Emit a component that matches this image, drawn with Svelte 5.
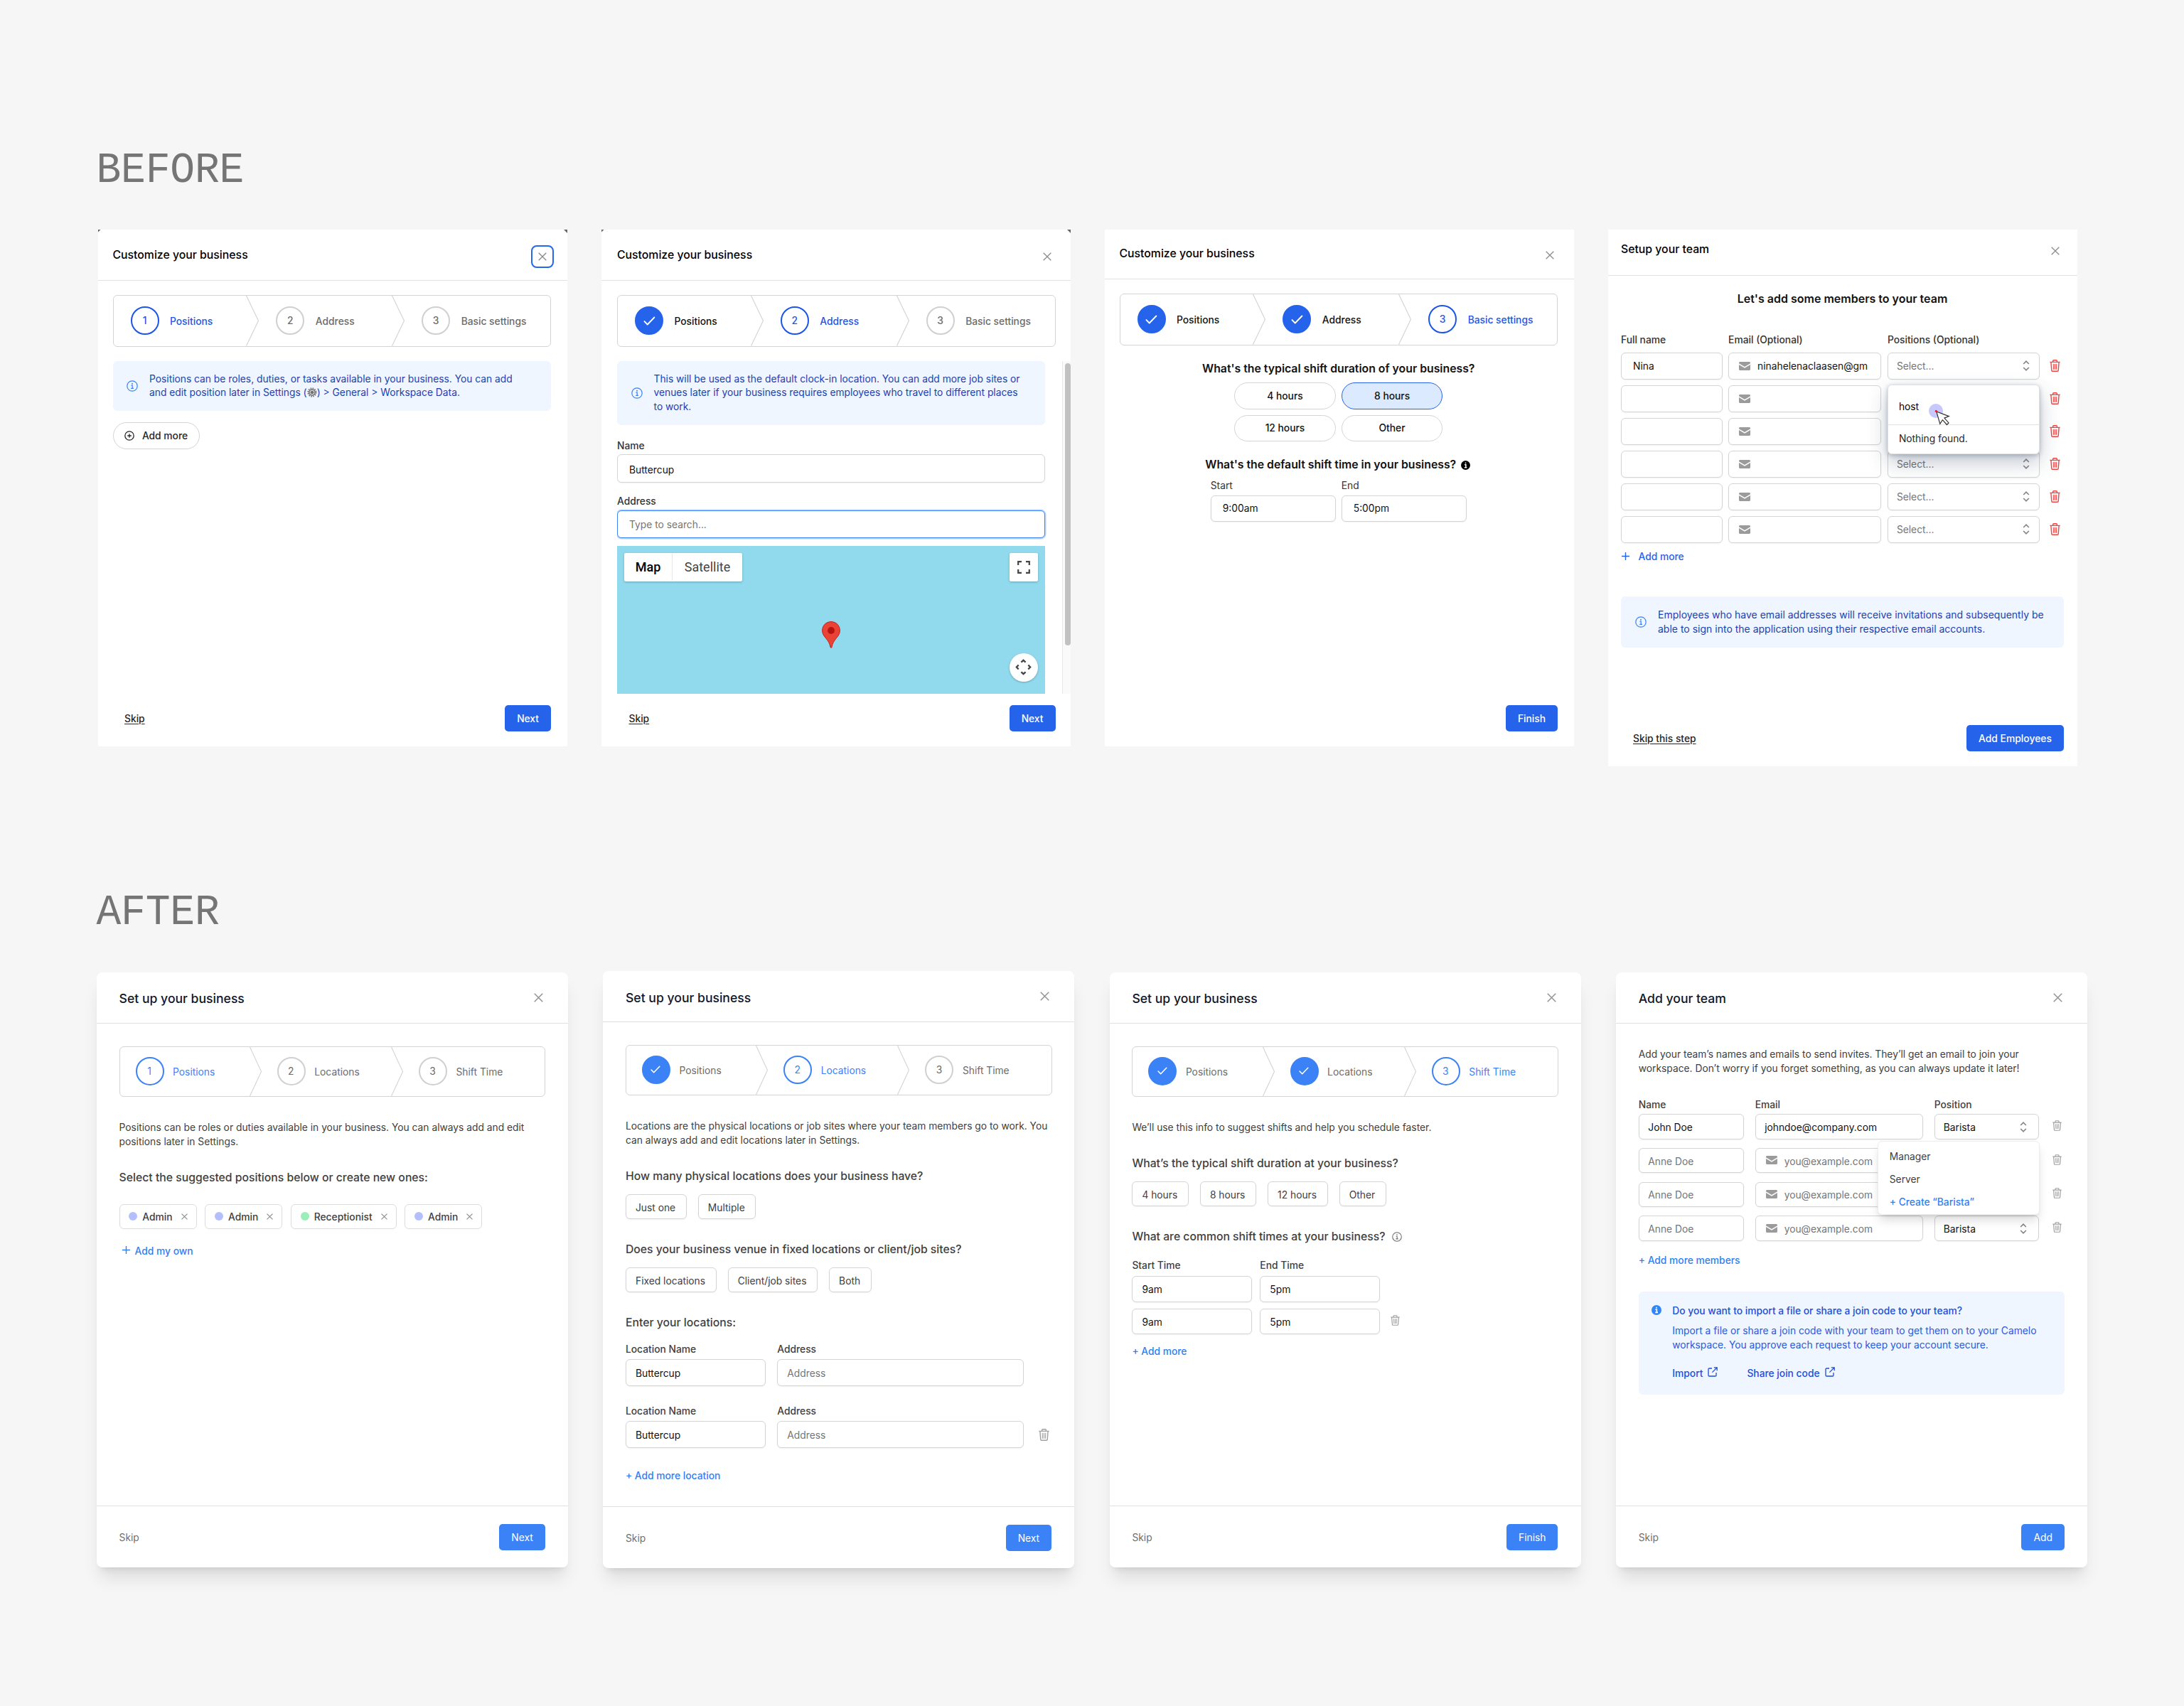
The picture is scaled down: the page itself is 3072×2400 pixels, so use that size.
<script>
  const steps = ['Positions', 'Address', 'Basic settings'];
  const newSteps = ['Positions', 'Locations', 'Shift Time'];
  const tags = [
    { name: 'Admin', tone: 'indigo' },
    { name: 'Admin', tone: 'indigo' },
    { name: 'Receptionist', tone: 'green' },
    { name: 'Admin', tone: 'indigo' },
  ];
  const oldRows = [
    { name: 'Nina', email: 'ninahelenaclaasen@gm' },
    { name: '', email: '' },
    { name: '', email: '' },
    { name: '', email: '' },
    { name: '', email: '' },
    { name: '', email: '' },
  ];
  const newRows = ['Barista', '', '', 'Barista'];
</script>

{#snippet cross()}
  <svg class="cross" viewBox="0 0 12 12"><path d="M.7.7l10.6 10.6M11.3.7L.7 11.3" /></svg>
{/snippet}

{#snippet info()}
  <svg class="info" viewBox="0 0 16 16">
    <circle cx="8" cy="8" r="7.2" />
    <path d="M6.4 7.2h1.8v4M6.2 11.3h3.8" />
    <circle class="dot" cx="8" cy="4.7" r=".95" />
  </svg>
{/snippet}

{#snippet infoSolid()}
  <svg class="info-solid" viewBox="0 0 14 14">
    <circle cx="7" cy="7" r="7" />
    <path d="M5.4 6.2h2v4.2M5.2 10.4h3.8" />
    <rect x="6.1" y="2.7" width="1.8" height="1.8" rx=".6" />
  </svg>
{/snippet}

{#snippet trash()}
  <svg class="trash" viewBox="0 0 15 17">
    <path d="M.4 3.4h14.2M4.7 3.2V1.6c0-.6.4-.9.9-.9h3.8c.5 0 .9.3.9.9v1.6M1.9 3.6l.9 11.5c0 .7.5 1.2 1.2 1.2h7c.7 0 1.2-.5 1.2-1.2l.9-11.5" />
    <path class="thin" d="M5.2 5.8l.3 8M7.5 5.8v8M9.8 5.8l-.3 8" />
  </svg>
{/snippet}

{#snippet mail()}
  <svg class="mail" viewBox="0 0 16 12">
    <path d="M0 2.2V1.5C0 .7.7 0 1.5 0h13c.8 0 1.5.7 1.5 1.5v.7L8 6.9z" />
    <path d="M0 4l8 4.7L16 4v6.5c0 .8-.7 1.5-1.5 1.5h-13C.7 12 0 11.3 0 10.5z" />
  </svg>
{/snippet}

{#snippet updown()}
  <svg class="updown" viewBox="0 0 10 15"><path d="M1.2 5L5 1.2 8.8 5M1.2 10L5 13.8 8.8 10" /></svg>
{/snippet}

{#snippet external()}
  <svg class="external" viewBox="0 0 14 14">
    <path d="M6 2H2.2C1.5 2 1 2.5 1 3.2v8.6c0 .7.5 1.2 1.2 1.2h8.6c.7 0 1.2-.5 1.2-1.2V8M8.8.8h4.4v4.4M13 1L6.4 7.6" />
  </svg>
{/snippet}

{#snippet stepper(labels, active)}
  <ol class="stepper">
    {#each labels as label, i}
      <li class:done={i < active} class:active={i === active}>
        <span class="bubble">
          {#if i < active}
            <svg class="check" viewBox="0 0 18 14"><path d="M1.4 7.6l4.6 4.8L16.4 1.6" /></svg>
          {:else}{i + 1}{/if}
        </span>
        <span class="step-label">{label}</span>
        {#if i < labels.length - 1}
          <svg class="chevron" viewBox="0 0 18 72" preserveAspectRatio="none"><path d="M.5 0L17.5 36 .5 72" /></svg>
        {/if}
      </li>
    {/each}
  </ol>
{/snippet}

<main>
  <h1>BEFORE</h1>
  <section class="row before">
    <article class="card dark-corners">
      <header><h2>Customize your business</h2><span class="focus-ring">{@render cross()}</span></header>
      <div class="body">
        {@render stepper(steps, 0)}
        <div class="notice">
          {@render info()}
          <p>Positions can be roles, duties, or tasks available in your business. You can add<br />and edit position later in Settings (<svg class="gear" viewBox="0 0 14 14"><circle class="teeth" cx="7" cy="7" r="5.7" /><circle class="rim" cx="7" cy="7" r="4.2" /><circle class="hub" cx="7" cy="7" r="1.5" /></svg>) &gt; General &gt; Workspace Data.</p>
        </div>
        <button class="pill add-pill">
          <svg class="plus-circle" viewBox="0 0 14 14"><circle cx="7" cy="7" r="6.2" /><path d="M7 4.2v5.6M4.2 7h5.6" /></svg>
          Add more
        </button>
      </div>
      <footer><a class="skip">Skip</a><button class="primary">Next</button></footer>
    </article>

    <article class="card dark-corners address">
      <header><h2>Customize your business</h2>{@render cross()}</header>
      <div class="body">
        {@render stepper(steps, 1)}
        <div class="scroll">
          <div class="scroll-content">
            <div class="notice flush">
              {@render info()}
              <p>This will be used as the default clock-in location. You can add more job sites or<br />venues later if your business requires employees who travel to different places<br />to work.</p>
            </div>
            <span class="label name-label">Name</span>
            <div class="input name-input">Buttercup</div>
            <span class="label address-label">Address</span>
            <div class="input focused placeholder">Type to search...</div>
            <div class="map">
              <div class="map-top">
                <div class="map-type"><b>Map</b><span>Satellite</span></div>
                <div class="map-btn">
                  <svg class="full" viewBox="0 0 18 18"><path d="M1.2 6V1.2H6M12 1.2h4.8V6M16.8 12v4.8H12M6 16.8H1.2V12" /></svg>
                </div>
              </div>
              <svg class="pin" viewBox="0 0 26 38">
                <path d="M13 .6C6 .6.6 6 .6 12.9c0 4.7 2.3 7.5 5 10.9 3.2 4 5.4 7 6.4 12.6.2 1.2 1.8 1.2 2 0 1-5.6 3.2-8.6 6.4-12.6 2.7-3.4 5-6.2 5-10.9C25.4 6 20 .6 13 .6z" />
                <circle cx="13" cy="13" r="4.9" />
              </svg>
              <div class="map-btn round">
                <svg class="pan" viewBox="0 0 24 24"><path d="M8.8 4.9L12 1.9l3.200 3M8.800 19.100l3.200 3 3.200-3M4.900 8.800l-3 3.200 3 3.200M19.100 8.800l3 3.200-3 3.200" /></svg>
              </div>
            </div>
          </div>
          <div class="scrollbar"><span class="thumb"></span></div>
        </div>
      </div>
      <footer><a class="skip">Skip</a><button class="primary">Next</button></footer>
    </article>

    <article class="card third">
      <header><h2>Customize your business</h2>{@render cross()}</header>
      <div class="body centered">
        {@render stepper(steps, 2)}
        <h3>What's the typical shift duration of your business?</h3>
        <div class="durations">
          <button class="pill">4 hours</button>
          <button class="pill selected">8 hours</button>
          <button class="pill">12 hours</button>
          <button class="pill">Other</button>
        </div>
        <h3 class="second">What's the default shift time in your business? {@render infoSolid()}</h3>
        <div class="shift">
          <label><span class="label">Start</span><span class="input">9:00am</span></label>
          <label><span class="label">End</span><span class="input">5:00pm</span></label>
        </div>
      </div>
      <footer class="end"><button class="primary">Finish</button></footer>
    </article>

    <article class="card team">
      <header><h2>Setup your team</h2>{@render cross()}</header>
      <div class="body">
        <h3>Let's add some members to your team</h3>
        <div class="grid heads">
          <span class="label">Full name</span><span class="label">Email (Optional)</span><span class="label">Positions (Optional)</span>
        </div>
        <div class="rows">
          {#each oldRows as r, i}
            <div class="grid">
              <div class="input">{r.name}</div>
              <div class="input with-icon">{@render mail()}{r.email}</div>
              <div class="cell">
                <div class="input select"><span>{i === 1 || i === 2 ? '' : 'Select...'}</span>{@render updown()}</div>
                {#if i === 1}
                  <div class="combo">
                    <div class="query">host</div>
                    <div class="empty">Nothing found.</div>
                    <svg class="pointer" viewBox="0 0 32 32">
                      <circle class="halo" cx="10" cy="10" r="10" />
                      <path d="M10.800 11l5 17.300 3.600-5.600 6 6.800 2.600-2.600-6-6.800 6.300-2.500z" />
                      <circle class="spot" cx="10.300" cy="10.300" r="1.500" />
                    </svg>
                  </div>
                {/if}
              </div>
              {@render trash()}
            </div>
          {/each}
        </div>
        <a class="link plus-link">
          <svg class="plus" viewBox="0 0 11 11"><path d="M5.500 0v11M0 5.500h11" /></svg>Add more
        </a>
        <div class="notice">
          {@render info()}
          <p>Employees who have email addresses will receive invitations and subsequently be<br />able to sign into the application using their respective email accounts.</p>
        </div>
      </div>
      <footer><a class="skip">Skip this step</a><button class="primary">Add Employees</button></footer>
    </article>
  </section>

  <h1 class="after-title">AFTER</h1>
  <section class="row after">
    <article class="card">
      <header><h2>Set up your business</h2>{@render cross()}</header>
      <div class="body">
        {@render stepper(newSteps, 0)}
        <p class="lead">Positions can be roles or duties available in your business. You can always add and edit<br />positions later in Settings.</p>
        <h3>Select the suggested positions below or create new ones:</h3>
        <div class="tags">
          {#each tags as t}
            <span class="tag"><i class="dot {t.tone}"></i>{t.name}{@render cross()}</span>
          {/each}
        </div>
        <a class="link own"><svg class="plus" viewBox="0 0 11 11"><path d="M5.500 0v11M0 5.500h11" /></svg>Add my own</a>
      </div>
      <footer><a class="skip">Skip</a><button class="primary">Next</button></footer>
    </article>

    <article class="card locations">
      <header><h2>Set up your business</h2>{@render cross()}</header>
      <div class="body">
        {@render stepper(newSteps, 1)}
        <p class="lead">Locations are the physical locations or job sites where your team members go to work. You<br />can always add and edit locations later in Settings.</p>
        <h3>How many physical locations does your business have?</h3>
        <div class="choices"><button>Just one</button><button>Multiple</button></div>
        <h3 class="next-q">Does your business venue in fixed locations or client/job sites?</h3>
        <div class="choices"><button>Fixed locations</button><button>Client/job sites</button><button>Both</button></div>
        <h3 class="next-q">Enter your locations:</h3>
        {#each [0, 1] as n}
          <div class="place" class:again={n === 1}>
            <label><span class="label">Location Name</span><span class="input">Buttercup</span></label>
            <label><span class="label">Address</span><span class="input placeholder">Address</span></label>
            {#if n === 1}{@render trash()}{/if}
          </div>
        {/each}
        <a class="link">+ Add more location</a>
      </div>
      <footer><a class="skip">Skip</a><button class="primary">Next</button></footer>
    </article>

    <article class="card times">
      <header><h2>Set up your business</h2>{@render cross()}</header>
      <div class="body">
        {@render stepper(newSteps, 2)}
        <p class="lead">We’ll use this info to suggest shifts and help you schedule faster.</p>
        <h3>What’s the typical shift duration at your business?</h3>
        <div class="choices"><button>4 hours</button><button>8 hours</button><button>12 hours</button><button>Other</button></div>
        <h3 class="next-q">What are common shift times at your business? {@render info()}</h3>
        <div class="slots">
          <span class="label">Start Time</span><span class="label">End Time</span><span></span>
          <div class="input">9am</div><div class="input">5pm</div><span></span>
          <div class="input">9am</div><div class="input">5pm</div>{@render trash()}
        </div>
        <a class="link">+ Add more</a>
      </div>
      <footer><a class="skip">Skip</a><button class="primary">Finish</button></footer>
    </article>

    <article class="card members">
      <header><h2>Add your team</h2>{@render cross()}</header>
      <div class="body">
        <p class="lead">Add your team’s names and emails to send invites. They’ll get an email to join your<br />workspace. Don’t worry if you forget something, as you can always update it later!</p>
        <div class="grid heads"><span class="label">Name</span><span class="label">Email</span><span class="label">Position</span></div>
        <div class="rows">
          {#each newRows as position, n}
            <div class="grid">
              <div class="input" class:placeholder={n > 0}>{n === 0 ? 'John Doe' : 'Anne Doe'}</div>
              {#if n === 0}
                <div class="input">johndoe@company.com</div>
              {:else}
                <div class="input with-icon placeholder">{@render mail()}you@example.com</div>
              {/if}
              <div class="cell">
                <div class="input select"><span>{position}</span>{@render updown()}</div>
                {#if n === 0}
                  <div class="menu"><span>Manager</span><span>Server</span><span class="create">+ Create “Barista”</span></div>
                {/if}
              </div>
              {@render trash()}
            </div>
          {/each}
        </div>
        <a class="link">+ Add more members</a>
        <div class="banner">
          {@render infoSolid()}
          <div>
            <strong>Do you want to import a file or share a join code to your team?</strong>
            <p>Import a file or share a join code with your team to get them on to your Camelo<br />workspace. You approve each request to keep your account secure.</p>
            <div class="banner-links"><a>Import {@render external()}</a><a>Share join code {@render external()}</a></div>
          </div>
        </div>
      </div>
      <footer><a class="skip">Skip</a><button class="primary">Add</button></footer>
    </article>
  </section>
</main>

<style>
  :global(body) { background: #f6f6f6; }
  main {
    box-sizing: border-box;
    width: 3072px;
    height: 2400px;
    padding-left: 137px;
    background: #f6f6f6;
    font-family: Inter, 'Liberation Sans', sans-serif;
    font-size: 13.8px;
    line-height: 20px;
    color: #262626;
    overflow: hidden;
  }
  main :global(*) { box-sizing: border-box; }
  h1, h2, h3, p, ol { margin: 0; padding: 0; }
  svg { display: block; flex: none; fill: none; stroke: currentColor; }
  button { font: inherit; color: inherit; padding: 0; background: #fff; border: 1px solid #d4d4d4; white-space: nowrap; }
  p, h2, h3, span, a { white-space: nowrap; }

  h1 {
    height: 66px;
    margin: 207px 0 0 -1.5px;
    font: 400 58px/66px 'Liberation Mono', monospace;
    letter-spacing: -.2px;
    color: #757575;
    transform: scaleY(1.05);
  }
  .after-title { margin-top: 173px; }
  .row { display: flex; align-items: flex-start; }
  .before { gap: 48px; margin: 50px 0 0 .5px; height: 755px; }
  .after { gap: 49.4px; margin: 50.5px 0 0 -1px; }

  .card { display: flex; flex-direction: column; flex: none; background: #fff; position: relative; }
  .before .card { width: 660px; height: 727px; }
  .dark-corners { background: linear-gradient(135deg, #666 2px, transparent 3px), linear-gradient(225deg, #666 3px, transparent 4px), #fff; }
  header, footer { display: flex; justify-content: space-between; align-items: center; flex: none; }
  .before header { height: 72px; padding: 0 22px 0 21px; border-bottom: 1px solid #e2e2e2; }
  .before header > :global(.cross) { margin: 4px 5px 0 0; }
  h2 { font-size: 15.8px; font-weight: 500; line-height: 24px; color: #000; }
  .cross { width: 12px; height: 12px; color: #8b8b8b; stroke-width: 1.3; }
  .focus-ring {
    display: flex; align-items: center; justify-content: center;
    width: 32px; height: 32px; margin: 4px -3px 0 0;
    border: 2px solid #2368ee; border-radius: 8px;
  }
  .body { display: flex; flex-direction: column; align-items: flex-start; flex: 1; min-height: 0; }
  .before .body { padding: 20px 22.5px 0 21px; }
  .before footer { padding: 0 22.5px 20.7px 37.5px; }
  .before footer.end { justify-content: flex-end; }

  .stepper {
    display: flex; list-style: none; width: 100%; height: 72.5px; flex: none;
    border: 1px solid #d4d4d4; border-radius: 6px; background: #fff;
    font-weight: 500; color: #6b6b6b;
  }
  .stepper li { display: flex; align-items: center; flex: 1; padding-left: 24px; }
  .bubble {
    display: flex; align-items: center; justify-content: center;
    width: 40px; height: 40px; margin-right: 15.5px;
    border: 2px solid #d0d0d0; border-radius: 50%;
  }
  .step-label { flex: 1; padding-top: 1px; }
  .chevron { width: 18px; height: 100%; color: #d4d4d4; stroke-width: 1.2; }
  .active { color: #1d55e8; }
  .active .bubble { border-color: #1d55e8; }
  .done { color: #111; }
  .done .bubble { background: #2563eb; border-color: #2563eb; color: #fff; }
  .check { width: 17px; height: 13px; stroke-width: 2; stroke-linecap: round; stroke-linejoin: round; }

  .notice {
    display: flex; align-items: center; width: 100%; flex: none; margin-top: 20px;
    padding: 16.2px 0 15px 19.5px; border-radius: 6px;
    background: #eff6ff; color: #1e3fae; line-height: 19.8px;
  }
  .notice.flush { margin-top: 0; }
  .notice p { margin-left: 16px; }
  .info { width: 16px; height: 16px; stroke-width: 1.2; }
  .info .dot { fill: currentColor; stroke: none; }
  .notice .info { color: #3b82f6; }
  .gear { display: inline-block; width: 14px; height: 14px; vertical-align: -2px; }
  .gear .teeth { stroke: #767676; stroke-width: 2; stroke-dasharray: 1.5 1.48; }
  .gear .rim { stroke: #777; stroke-width: 1.6; fill: #c9c9c9; }
  .gear .hub { stroke: #555; stroke-width: 1; fill: #888; }

  .pill { display: flex; align-items: center; justify-content: center; height: 37.5px; border-radius: 19px; color: #111; font-weight: 500; }
  .add-pill { margin-top: 16px; width: 122px; gap: 11px; color: #262626; }
  .plus-circle { width: 14px; height: 14px; stroke-width: 1.3; }
  .skip { color: #262626; text-decoration: underline; text-underline-offset: 2px; font-weight: 500; }
  .primary { height: 37.5px; padding: 0 17px; border: 0; border-radius: 5px; background: #2563eb; color: #fff; font-weight: 500; }

  .label { display: block; font-weight: 500; color: #333; line-height: 20px; }
  .input {
    display: flex; align-items: center; height: 37.4px; padding-left: 16px;
    border: 1px solid #d4d4d4; border-radius: 6px; background: #fff; color: #111;
    box-shadow: 0 1px 2px rgba(0, 0, 0, .05);
  }
  .placeholder { color: #757575; }

  .before .address header { padding: 0 22px 0 22.5px; }
  .before .address .body { padding: 20px 21px 0 22.5px; }
  .before .address footer { padding: 0 21px 20.7px 39px; }
  .scroll { display: flex; justify-content: space-between; align-self: stretch; height: 468px; margin: 20px -21px 0 0; overflow: hidden; }
  .scroll-content { width: 601.5px; margin-left: -2px; padding-left: 2px; box-sizing: content-box; }
  .scrollbar { width: 12px; padding: 3px 0 0 3px; background: #fafafa; border-left: 1px solid #e8e8e8; }
  .thumb { display: block; width: 8px; height: 397px; border-radius: 4px; background: #c1c1c1; }
  .name-label { margin-top: 18.5px; }
  .name-input { margin-top: 2px; height: 40.3px; padding-top: 4px; }
  .address-label { margin-top: 16.5px; }
  .focused { height: 38.5px; margin-top: 3px; border: 1px solid #3b82f6; box-shadow: 0 0 0 1.5px #bcd6fd; }
  .map { display: flex; flex-direction: column; height: 208px; margin-top: 11.5px; padding: 9.5px 10px 0; background: #91daee; font-family: Roboto, sans-serif; }
  .map-top { display: flex; justify-content: space-between; }
  .map-type { display: flex; align-items: center; height: 40px; background: #fff; border-radius: 2px; box-shadow: 0 1px 3px rgba(0, 0, 0, .25); font-size: 18px; color: #444; }
  .map-type b { width: 68px; line-height: 38px; border-right: 1px solid #e6e6e6; text-align: center; font-weight: 500; color: #000; }
  .map-type span { width: 98px; text-align: center; }
  .map-btn { display: flex; align-items: center; justify-content: center; width: 40px; height: 40px; background: #fff; border-radius: 2px; color: #444; box-shadow: 0 1px 3px rgba(0, 0, 0, .25); }
  .map-btn.round { border-radius: 50%; align-self: flex-end; margin-top: 7px; }
  .full { width: 18px; height: 18px; stroke-width: 2.2; }
  .pan { width: 23px; height: 23px; stroke-width: 2.4; }
  .pin { width: 26px; height: 38px; align-self: center; margin-top: 56px; fill: #ea4335; stroke: #c5221f; stroke-width: 1; }
  .pin circle { fill: #b31412; stroke: none; }

  .third header { height: 70px; padding: 0 22.5px 2px 21px; }
  .before .third .body { padding-top: 20px; }
  .centered { align-items: center !important; }
  .before h3 { font-size: 15.8px; font-weight: 600; line-height: 24px; color: #111; margin-top: 21px; }
  .durations { display: grid; grid-template-columns: 142.6px 142.6px; gap: 8px; margin-top: 7.5px; }
  .selected { background: #dbeafe; border-color: #2563eb; }
  .second .info-solid { width: 13px; height: 13px; color: #000; }
  .before h3.second { display: flex; align-items: center; gap: 7px; margin-left: -2px; }
  .info-solid { width: 14px; height: 14px; fill: currentColor; stroke: none; }
  .info-solid path { fill: none; stroke: #fff; stroke-width: 1.6; }
  .info-solid rect { fill: #fff; }
  .shift { display: grid; grid-template-columns: 176px 176px; gap: 8px; margin-top: 6.5px; }
  .shift .input { margin-top: 4px; }
  .shift .label { font-weight: 400; }

  .before .team { height: 755px; }
  .team header { height: 65px; padding: 0 19.5px 9px 18.5px; }
  .before .team .body { padding: 20px 18.5px 0; }
  .before .team footer { padding: 0 18.5px 20.7px 35.5px; }
  .before .team .primary { font-size: 13.9px; }
  .team h3 { font-size: 16px !important; margin: 0 !important; align-self: center; }
  .team .grid { display: grid; grid-template-columns: 142.5px 215.2px 214.6px 15px; column-gap: 8.6px; align-items: center; }
  .team .heads { margin-top: 35.5px; }
  .team .rows { display: flex; flex-direction: column; gap: 8.6px; margin-top: 8.7px; }
  .trash { width: 15px; height: 17px; margin-left: 5px; color: #ef4444; stroke-width: 1.4; }
  .trash .thin { stroke-width: 1.1; }
  .mail { width: 16px; height: 12px; margin-right: 10px; fill: #9b9b9b; stroke: none; }
  .with-icon { padding-left: 14px; }
  .cell { position: relative; }
  .select { justify-content: space-between; padding: 0 13px 0 12px; color: #757575; }
  .updown { width: 10px; height: 15px; color: #868686; stroke-width: 1.7; }
  .combo {
    position: absolute; z-index: 2; left: 0; top: -1px; width: 100%; height: 97.5px;
    background: #fff; border: 1px solid #e0e0e0; border-radius: 6px;
    box-shadow: 0 12px 28px rgba(40, 60, 90, .28), 0 2px 6px rgba(40, 60, 90, .3);
  }
  .query { height: 56px; padding: 20px 0 0 15px; border-bottom: 1px solid #e2e2e2; color: #000; }
  .empty { padding: 9px 0 0 15px; }
  .pointer { position: absolute; left: 57px; top: 26px; width: 32px; height: 32px; }
  .pointer path { fill: #fff; stroke: #333; stroke-width: 1.2; }
  .pointer .halo { fill: #c7c8fb; stroke: none; }
  .pointer .spot { fill: #f11; stroke: none; }
  .link { font-weight: 500; color: #2f80f5; }
  .plus { width: 11px; height: 11px; stroke-width: 1.4; }
  .plus-link { display: flex; align-items: center; gap: 12.5px; margin: 9px 0 0 1px; color: #2563eb; }
  .team .notice { margin-top: 46px; padding: 16px 0 16px 20px; font-size: 14px; line-height: 20.1px; }

  /* redesigned dialogs */
  .after .card { width: 663px; height: 837px; border-radius: 8px; box-shadow: 0 20px 25px -5px rgba(0, 0, 0, .1), 0 8px 10px -6px rgba(0, 0, 0, .1); }
  .after header { height: 72.5px; padding: 0 35px 0 31.6px; border-bottom: 1px solid #e0e0e0; }
  .after h2 { margin-top: 4px; font-size: 17.6px; color: #0f172a; }
  .after header .cross { width: 13px; height: 13px; color: #949494; stroke-width: 1.4; }
  .after .body { padding: 31.5px 31.8px 0 31.6px; }
  .after footer { height: 86.5px; padding: 1px 32.3px 0 31.6px; border-top: 1px solid #e0e0e0; }
  .after .stepper { height: 71px; font-weight: 400; }
  .after .stepper li { padding-left: 22px; }
  .after .bubble { margin-right: 12.5px; padding: 0 1px 1px 0; }
  .after .step-label { padding-top: 2px; }
  .after .chevron { width: 17px; }
  .after .check { width: 14px; height: 11px; }
  .after .active { color: #3b82f6; }
  .after .active .bubble { border-color: #3b82f6; }
  .after .done { color: #6b6b6b; }
  .after .done .bubble { background: #3b82f6; border-color: #3b82f6; color: #fff; }
  .after .skip { padding-top: 1px; color: #6f6f6f; text-decoration: none; font-weight: 400; }
  .after .primary { padding-top: 1px; background: #3b82f6; font-weight: 400; }
  .lead { margin-top: 33px; color: #404040; }
  .after h3 { margin-top: 29px; font-size: 15.75px; font-weight: 500; line-height: 24px; color: #404040; }
  .tags { display: flex; gap: 11.8px; margin-top: 25px; }
  .tag { display: flex; align-items: center; height: 35px; padding: 2px 12px 0 12.7px; border: 1px solid #dcdcdc; border-radius: 6px; font-weight: 500; color: #404040; }
  .tag .dot { width: 12px; height: 12px; margin: 0 7px 2px 0; border-radius: 50%; }
  .indigo { background: #b4c0fd; }
  .green { background: #9aefb8; }
  .tag .cross { width: 9px; height: 9px; margin: 0 0 2px 12px; stroke-width: 1.5; }
  .own { display: flex; align-items: center; gap: 7px; margin: 21.5px 0 0 4px; }
  .own .plus { margin-bottom: 3px; }

  .after .locations { height: 839.5px; margin-top: -1.5px; }
  .after .locations header { height: 72px; }
  .choices { display: flex; gap: 16px; margin-top: 13.5px; }
  .choices button { height: 35.3px; padding: 2px 14.7px 0 13px; border-radius: 6px; color: #404040; box-shadow: 0 1px 2px rgba(0, 0, 0, .05); }
  .after h3.next-q { margin-top: 30.3px; }
  .place { display: grid; grid-template-columns: 197.5px 346.5px 15px; column-gap: 15.8px; align-items: end; margin-top: 14.9px; }
  .place.again { margin-top: 25px; }
  .place .input { margin-top: 4.6px; }
  .place .trash { margin: 0 0 10px 5px; }
  .after .input { padding: 2px 0 0 13px; }
  .after .with-icon { padding-left: 14px; }
  .after .label { color: #404040; }
  .after .trash { color: #a0a0a0; }
  .locations .link { margin-top: 29px; }

  .times .next-q { display: flex; align-items: center; gap: 10px; }
  .times .next-q .info { width: 14px; height: 14px; margin-top: 1px; color: #6b6b6b; }
  .slots { display: grid; grid-template-columns: 168.2px 168.2px 13px; column-gap: 11.8px; row-gap: 9px; align-items: center; margin-top: 18.5px; }
  .slots .label { margin-bottom: -4px; }
  .slots .input { height: 36.6px; }
  .slots .trash { width: 13px; height: 15px; margin-left: 3.5px; margin-bottom: 2px; }
  .times .link { margin-top: 13.5px; }

  .members .body { padding-top: 33px; }
  .members .lead { margin-top: 0; line-height: 20.2px; }
  .members .grid { display: grid; grid-template-columns: 147.8px 236px 147.5px 13px; column-gap: 16.1px; align-items: center; }
  .members .heads { margin-top: 31px; }
  .members .rows { display: flex; flex-direction: column; gap: 12.5px; margin-top: 3px; }
  .members .input { height: 35.2px; padding-left: 12.5px; }
  .members .with-icon { padding-left: 14px; }
  .members .with-icon .mail { margin-bottom: 3px; }
  .members .trash { width: 13px; height: 15px; margin-left: 3px; margin-bottom: 3px; }
  .members .select { padding: 2px 16px 0 12px; color: #111; }
  .members .select .updown { margin-bottom: 2px; }
  .menu {
    position: absolute; z-index: 2; right: -1px; top: 38px; width: 228px; height: 104px;
    display: flex; flex-direction: column; gap: 11.7px; padding: 11px 15.5px;
    background: #fff; border: 1px solid #ededed; border-radius: 6px; color: #404040;
    box-shadow: 0 10px 15px -3px rgba(0, 0, 0, .15), 0 4px 6px -4px rgba(0, 0, 0, .15);
  }
  .create { color: #2f80f5; font-weight: 500; }
  .members .link { margin-top: 17px; }
  .banner { display: flex; align-self: stretch; height: 145px; margin-top: 34.3px; padding: 17px 0 0 18.5px; border-radius: 6px; background: #eff6ff; color: #1d4ed8; }
  .banner .info-solid { margin: 2px 15px 0 0; color: #2f86f8; }
  .banner strong { display: block; font-weight: 500; white-space: nowrap; }
  .banner p { margin-top: 8px; color: #2b59db; }
  .banner-links { display: flex; gap: 41px; margin-top: 20px; font-weight: 500; }
  .banner-links a { display: flex; align-items: center; gap: 7px; }
  .external { width: 14px; height: 14px; margin-bottom: 4px; stroke-width: 1.3; }
</style>
